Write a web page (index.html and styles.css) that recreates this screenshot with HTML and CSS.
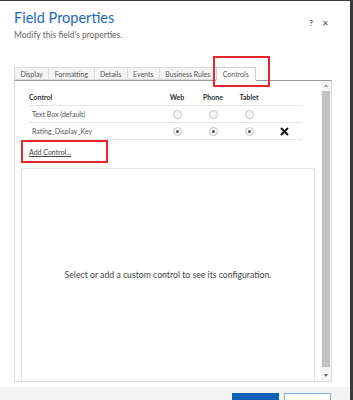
FILE: index.html
```html
<!DOCTYPE html>
<html lang="en">
<head>
  <meta charset="UTF-8">
  <title>Field Properties</title>
  <link rel="stylesheet" href="styles.css">
</head>
<body>
  <div class="dialog">
    <div class="dialog-header">
      <div>
        <h1 class="title">Field Properties</h1>
        <div class="subtitle">Modify this field's properties.</div>
      </div>
      <div class="tools">
        <span class="help">?</span>
        <span class="close">&#x2715;</span>
      </div>
    </div>

    <div class="tabs">
      <div class="tab">Display</div>
      <div class="tab">Formatting</div>
      <div class="tab">Details</div>
      <div class="tab">Events</div>
      <div class="tab">Business Rules</div>
      <div class="tab active">Controls
        <span class="highlight tab-highlight"></span>
      </div>
    </div>

    <div class="panel">
      <div class="panel-body">
        <div class="controls-table">
          <div class="row head">
            <div class="cell name">Control</div>
            <div class="cell">Web</div>
            <div class="cell">Phone</div>
            <div class="cell">Tablet</div>
            <div class="cell"></div>
          </div>
          <div class="row">
            <div class="cell name">Text Box (default)</div>
            <div class="cell"><span class="radio"></span></div>
            <div class="cell"><span class="radio"></span></div>
            <div class="cell"><span class="radio"></span></div>
            <div class="cell"></div>
          </div>
          <div class="row">
            <div class="cell name">Rating_Display_Key</div>
            <div class="cell"><span class="radio checked"></span></div>
            <div class="cell"><span class="radio checked"></span></div>
            <div class="cell"><span class="radio checked"></span></div>
            <div class="cell">
              <svg class="remove" width="9" height="9" viewBox="0 0 9 9">
                <path d="M1 1 L8 8 M8 1 L1 8" stroke="#111" stroke-width="2"/>
              </svg>
            </div>
          </div>
        </div>

        <div class="add-row">
          <a class="add-link" href="#">Add Control...</a>
          <span class="highlight add-highlight"></span>
        </div>

        <div class="config">
          Select or add a custom control to see its configuration.
        </div>
      </div>

      <div class="scrollbar">
        <span class="arrow up"></span>
        <span class="thumb"></span>
        <span class="arrow down"></span>
      </div>
    </div>

    <div class="footer">
      <button class="btn primary">OK</button>
      <button class="btn">Cancel</button>
    </div>
  </div>
</body>
</html>
```

FILE: styles.css
```css
body {
  margin: 0;
  font-family: Lato, "Open Sans", sans-serif;
  background: #3c3c3c;
}
.dialog {
  width: 350px;
  height: 399px;
  margin-top: 1px;
  background: #fff;
  display: flex;
  flex-direction: column;
  overflow: hidden;
}
.dialog-header {
  flex-shrink: 0;
  display: flex;
  justify-content: space-between;
  padding: 7px 21px 0 14px;
  height: 55px;
  box-sizing: border-box;
}
.title {
  margin: 0;
  font-size: 14.5px;
  font-weight: 400;
  color: #2266bb;
  line-height: 20px;
}
.subtitle {
  font-size: 8.5px;
  color: #666;
  margin-top: 2px;
}
.tools {
  display: flex;
  gap: 9px;
  font-size: 8px;
  color: #555;
  padding-top: 10px;
}
.help {
  font-weight: 700;
}
.tabs {
  flex-shrink: 0;
  display: flex;
  align-items: flex-end;
  margin: 10px 0 0 14px;
  height: 14px;
  position: relative;
  z-index: 1;
}
.tab {
  font-size: 7px;
  color: #555;
  background: #f4f4f4;
  border: 1px solid #dcdcdc;
  border-right: none;
  height: 13px;
  line-height: 12px;
  box-sizing: border-box;
  padding: 0 5.4px;
}
.tab.active {
  position: relative;
  background: #fff;
  border: 1px solid #cfcfcf;
  border-bottom: 1px solid #fff;
  height: 14px;
  margin-bottom: -1px;
  padding: 0 6px;
}
.highlight {
  position: absolute;
  border: 2px solid #e8262b;
  box-sizing: border-box;
}
.tab-highlight {
  left: -4px;
  top: -12px;
  width: 57px;
  height: 31px;
}
.panel {
  flex-shrink: 0;
  margin: 0 18px 0 14px;
  height: 302px;
  border: 1px solid #dedede;
  border-top-color: #9a9a9a;
  box-sizing: border-box;
  display: flex;
}
.panel-body {
  flex: 1;
  display: flex;
  flex-direction: column;
  padding-left: 6px;
}
.controls-table {
  margin: 11px 0 0 8px;
  width: 273px;
}
.row {
  display: grid;
  grid-template-columns: 130px 36px 36px 36px 35px;
  height: 17px;
  box-sizing: border-box;
  align-items: center;
  border-bottom: 1px solid #e4e4e4;
  font-size: 7px;
  color: #555;
}
.row .name {
  padding-left: 3px;
}
.row.head {
  color: #333;
  font-weight: 700;
  height: 14px;
  align-items: start;
  padding-top: 1px;
}
.row.head .name {
  padding-left: 0;
}
.cell {
  text-align: center;
  display: flex;
  justify-content: center;
}
.cell.name {
  justify-content: flex-start;
}
.radio {
  width: 7px;
  height: 7px;
  border-radius: 50%;
  border: 1px solid #c4c4c4;
  background: #f6f6f6;
  box-sizing: content-box;
  display: inline-flex;
  align-items: center;
  justify-content: center;
}
.radio.checked::after {
  content: "";
  width: 3px;
  height: 3px;
  border-radius: 50%;
  background: #555;
}
.add-row {
  position: relative;
  height: 28px;
  padding: 7px 0 0 8px;
  box-sizing: border-box;
  font-size: 7px;
  line-height: 10px;
}
.add-link {
  color: #444;
}
.add-highlight {
  left: 0;
  top: 0;
  width: 87px;
  height: 23px;
}
.config {
  flex: 1;
  border: 1px solid #e6e6e6;
  border-bottom: none;
  margin-right: 6px;
  display: flex;
  align-items: center;
  justify-content: center;
  font-size: 8.7px;
  color: #444;
  padding-bottom: 2px;
}
.scrollbar {
  width: 10px;
  display: flex;
  flex-direction: column;
  align-items: center;
  background: #f4f4f4;
  padding: 3px 0 4px;
  box-sizing: border-box;
}
.arrow {
  width: 0;
  height: 0;
  border-left: 2.5px solid transparent;
  border-right: 2.5px solid transparent;
}
.arrow.up {
  border-bottom: 3px solid #999;
}
.arrow.down {
  border-top: 3px solid #666;
}
.thumb {
  flex: 1;
  width: 8px;
  background: #c2c2c2;
  margin: 4px 0 7px;
}
.footer {
  margin-top: 5px;
  flex: 1;
  min-height: 0;
  background: #f4f4f4;
  display: flex;
  justify-content: flex-end;
  align-items: flex-start;
  gap: 5px;
  padding: 6px 19px 0 0;
}
.btn {
  flex-shrink: 0;
  width: 47px;
  height: 22px;
  font-family: inherit;
  font-size: 9px;
  border: 1px solid #7fb2e5;
  background: #fff;
  color: #1160b8;
}
.btn.primary {
  background: #1160b8;
  border-color: #1160b8;
  color: #fff;
}
```
